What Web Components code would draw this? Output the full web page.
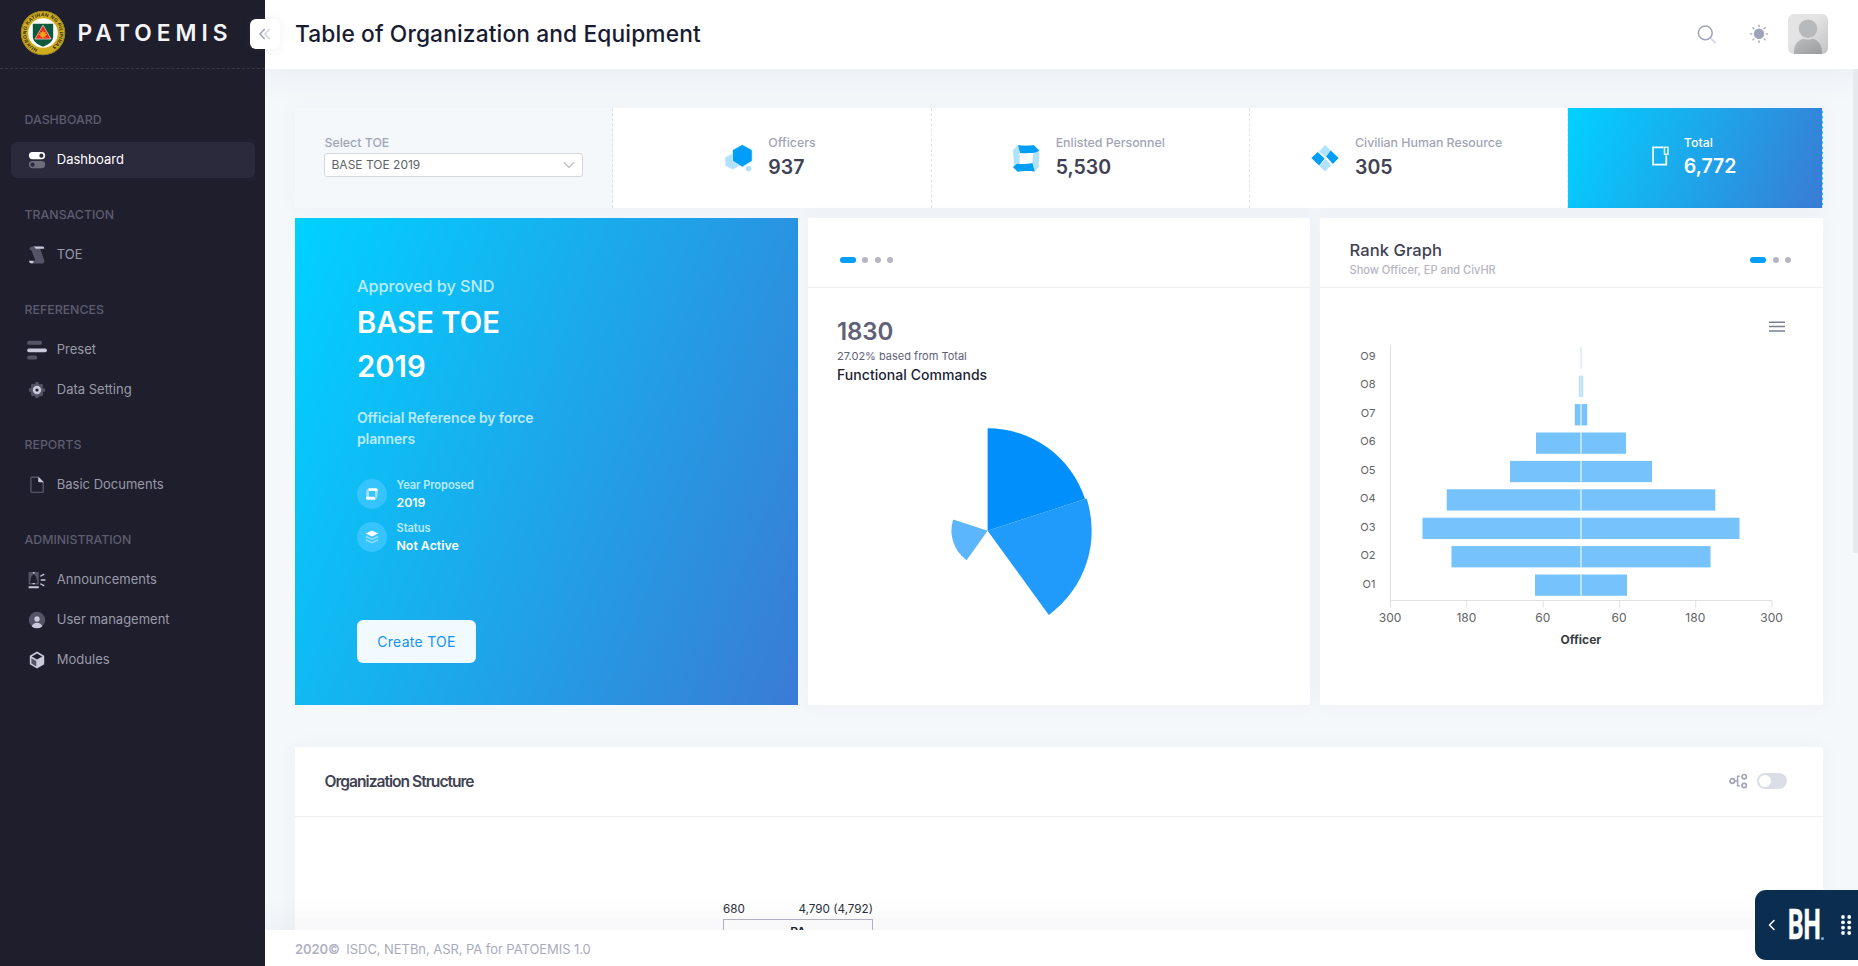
<!DOCTYPE html>
<html lang="en">
<head>
<meta charset="utf-8">
<title>PATOEMIS</title>
<style>
html,body{margin:0;height:100%;overflow:hidden}
body{font:400 13px/1.5 Inter,"Liberation Sans",sans-serif;color:#181c32;background:#f4f8fb}
</style>
</head>
<body>
<app-shell></app-shell>
<script>
const define=(name,html)=>customElements.define(name,class extends HTMLElement{
  constructor(){super();
    const t=document.createElement('template');
    t.innerHTML=typeof html==='function'?html(this):'<style>*{box-sizing:border-box}</style>'+html;
    this.attachShadow({mode:'open'}).append(t.content.cloneNode(true));}
});

/* ---------- icons ---------- */
const B='#c9c9dc',G='#555466';
const ICONS={
 toggles:`<path fill="#fff" fill-rule="evenodd" d="M5.5 2h9.1a3.6 3.6 0 0 1 0 7.2H5.5a3.6 3.6 0 0 1 0-7.2zM14.4 3.6a2.1 2.1 0 1 0 .01 0z"/><path fill="#6d6c7a" fill-rule="evenodd" d="M5.5 11h9.1a3.6 3.6 0 0 1 0 7.2H5.5a3.6 3.6 0 0 1 0-7.2zM5.6 12.5a2.1 2.1 0 1 0 .01 0z"/>`,
 scroll:`<path fill="${G}" d="M2.6 4.6C2.4 2.8 3.6 1.6 5.4 1.6H14l-.6 2.6 3.9 11.4c.4 1.6-.4 2.8-2 2.8H5.6l2.6-3.3L4.600 5.800z"/><path fill="${B}" d="M6 1.6h9.6c1.200 0 1.700.9 1.500 2.200H8.600C8.300 2.600 7.400 1.800 6 1.600zM2 15.700h4.800c0 1.600-.6 2.700-2 2.700-1.700 0-2.700-1-2.800-2.700z"/>`,
 bars:`<rect x=".2" y=".8" width="14.700" height="4" rx="1.6" fill="${G}"/><rect x=".2" y="8.400" width="19.700" height="3.800" rx="1.700" fill="${B}"/><rect x=".2" y="15.600" width="10" height="4" rx="1.600" fill="${G}"/>`,
 gear:`<g fill="${G}"><circle cx="10" cy="10" r="6.600"/><rect x="8.200" y="1.900" width="3.600" height="16.200" rx="1"/><rect x="1.900" y="8.200" width="16.200" height="3.600" rx="1"/><g transform="rotate(45 10 10)"><rect x="8.400" y="2.200" width="3.200" height="15.600" rx="1"/><rect x="2.200" y="8.400" width="15.600" height="3.200" rx="1"/></g></g><circle cx="10" cy="10" r="2.900" fill="#1e1e2d" stroke="${B}" stroke-width="2.600"/>`,
 file:`<path fill="none" stroke="${G}" stroke-width="1.400" d="M11.200 2.300H4.700c-.5 0-.8.3-.8.800v13.500c0 .5.300.8.800.8h10.700c.5 0 .8-.3.800-.8V7"/><path fill="${B}" d="M11.200 1.600l5.700 5.700h-4.500c-.8 0-1.200-.4-1.200-1.200z"/>`,
 siren:`<path fill="${G}" d="M2.600 1.900h8.200c.6 0 1 .4 1 1v11.600H1.600V2.900c0-.6.4-1 1-1z"/><path fill="#1e1e2d" d="M6.700 4.300c.6 0 1 .4 1.100 1 1.200.8 1.600 2 1.700 3.800l.8 2.900v.9H3.100V12l.8-2.900c.1-1.800.5-3 1.700-3.800.1-.6.5-1 1.100-1z"/><path fill="${B}" d="M5.900 2h1.600v1.400H5.900zM5.600 13h2.200v1.300H5.600zM1.600 16.200h10.200v2.100H2.200c-.4 0-.6-.2-.6-.6z"/><path stroke="${B}" stroke-width="1.400" stroke-linecap="round" d="M13.800 6l3-1.600M14.300 10h3.600M13.800 14l3 1.600"/>`,
 user:`<circle cx="10" cy="10" r="8.200" fill="${G}"/><circle cx="10" cy="9" r="2.700" fill="${B}"/><path fill="${B}" d="M4.800 16.400c.8-2.400 2.600-3.700 5.200-3.700s4.400 1.300 5.200 3.700A8.200 8.200 0 0 1 10 18.300a8.200 8.200 0 0 1-5.200-1.900z"/>`,
 cube:`<path fill="${B}" d="M10 1.600l7.200 4.200v8.400L10 18.400l-7.200-4.200V5.800z"/><path fill="#1e1e2d" d="M10 3.500l5.300 3.100L10 9.600 4.700 6.600z"/><path fill="${G}" d="M4.400 8.200L9.300 11v5.400l-4.900-2.900z"/>`
};
customElements.define('ui-icon',class extends HTMLElement{
  connectedCallback(){if(this.shadowRoot)return;
    this.attachShadow({mode:'open'}).innerHTML=`<style>:host{display:block;width:20px;height:20px;flex:none}svg{display:block}</style><svg width="20" height="20" viewBox="0 0 20 20">${ICONS[this.getAttribute('name')]}</svg>`;}
});

/* ---------- sidebar ---------- */
define('army-seal',`<style>:host{display:block;width:46px;height:46px;flex:none}svg{display:block}text{font:700 5px "Liberation Sans",sans-serif;fill:#2e2808}</style>
<svg width="46" height="46" viewBox="0 0 46 46"><defs><path id="ring" d="M23 39.600A16.600 16.600 0 1 1 23.010 39.600"/></defs>
<circle cx="23" cy="23" r="22.200" fill="#cfad1f"/><circle cx="23" cy="23" r="21.600" fill="none" stroke="#8d7a24" stroke-width=".8"/><circle cx="23" cy="23" r="14.800" fill="#fff"/>
<text><textPath href="#ring" startOffset="5" textLength="94">HUKBONG KATIHAN NG PILIPINAS</textPath></text>
<path fill="#0d5a3e" d="M12.800 13.800h20.400v12.400c0 5.200-4.200 7.800-10.200 10.600-6-2.800-10.200-5.400-10.200-10.600z"/><path fill="#f3241f" stroke="#f7e9d2" stroke-width=".7" d="M23 15.200l8 13.800H15z"/><circle cx="23" cy="24.600" r="2.700" fill="#f3a81c"/><path stroke="#f3a81c" stroke-width="1" d="M23 20.500v8.200M18.900 24.600h8.200M20.100 21.700l5.800 5.800M25.900 21.700l-5.800 5.800"/></svg>`);
define('brand-bar',`<style>:host{display:flex;box-sizing:border-box;height:69px;padding:0 0 2px 19.500px;align-items:center;gap:12px;border-bottom:1px dashed #393945;font-size:22.750px;font-weight:600;letter-spacing:5px;color:#f4f4f6;line-height:1}</style><army-seal></army-seal><span><slot></slot></span>`);
define('nav-heading',`<style>:host{display:flex;flex:none;box-sizing:border-box;align-items:center;height:40px;margin-top:15px;padding:1px 0 0 24.500px;font-size:12.350px;font-weight:500;color:#5d5c6d}</style><slot></slot>`);
customElements.define('nav-item',class extends HTMLElement{connectedCallback(){if(this.shadowRoot)return;
  this.attachShadow({mode:'open'}).innerHTML=`<style>:host{display:flex;flex:none;box-sizing:border-box;align-items:center;height:36px;margin:2px 10px 2px 11px;padding-left:15.800px;gap:10px;border-radius:6px;color:#9a9aa6}:host([active]){background:#2a2a3c;color:#fff}</style><ui-icon name="${this.getAttribute('icon')}"></ui-icon><span><slot></slot></span>`;}});
define('side-nav',`<style>:host{display:block;background:#1e1e2d}nav{padding-top:15.500px;display:flex;flex-direction:column}</style>
<brand-bar>PATOEMIS</brand-bar><nav>
<nav-heading>DASHBOARD</nav-heading><nav-item icon="toggles" active>Dashboard</nav-item>
<nav-heading>TRANSACTION</nav-heading><nav-item icon="scroll">TOE</nav-item>
<nav-heading>REFERENCES</nav-heading><nav-item icon="bars">Preset</nav-item><nav-item icon="gear">Data Setting</nav-item>
<nav-heading>REPORTS</nav-heading><nav-item icon="file">Basic Documents</nav-item>
<nav-heading>ADMINISTRATION</nav-heading><nav-item icon="siren">Announcements</nav-item><nav-item icon="user">User management</nav-item><nav-item icon="cube">Modules</nav-item>
</nav>`);

/* ---------- top and bottom bars ---------- */
define('top-bar',`<style>:host{display:flex;box-sizing:border-box;height:69px;padding:0 30px;align-items:center;background:#fff;box-shadow:0 10px 30px rgba(82,63,105,.05);position:relative;z-index:2}
h1{margin:-2px auto 0 0;font-size:22.750px;font-weight:500;letter-spacing:.12px;line-height:1.2;color:#181c32}svg{display:block;flex:none}.sun{margin:-1px 19px 0 31px}.se{margin-top:-1px}.av{border-radius:6px;margin-top:-1px}</style>
<h1>Table of Organization and Equipment</h1>
<svg class="se" width="22" height="22" viewBox="0 0 22 22" fill="none"><path d="M14.200 14.700l5.500 5.500" stroke="#d8d9e3" stroke-width="2"/><circle cx="9.300" cy="9.900" r="6.900" stroke="#a1a5bb" stroke-width="1.500"/></svg>
<svg class="sun" width="20" height="20" viewBox="0 0 20 20"><circle cx="10" cy="9.800" r="5.200" fill="#9fa2bb"/><g stroke="#9fa2bb" stroke-width="1.300" stroke-linecap="round"><path d="M10 1.200v1.400M10 17v1.400M1.400 9.800h1.400M17.200 9.800h1.400M3.900 3.700l1 1M15.100 14.900l1 1M3.900 15.900l1-1M15.100 4.700l1-1"/></g></svg>
<svg class="av" width="40" height="40" viewBox="0 0 40 40"><defs><linearGradient id="a" x1="0" y1="0" x2="1" y2="1"><stop offset=".4" stop-color="#e4e4e5"/><stop offset="1" stop-color="#c2c2c3"/></linearGradient><linearGradient id="b" x1="0" y1="0" x2="1" y2="1"><stop offset="0" stop-color="#bcbdbf"/><stop offset="1" stop-color="#9b9c9e"/></linearGradient></defs><rect width="40" height="40" fill="url(#a)"/><circle cx="20" cy="14.700" r="9.300" fill="#b8b9bb"/><path fill="url(#b)" d="M6 40v-2c0-7 4-12.500 9.500-13.300 2.800 1.200 6.200 1.200 9 0C30 25.500 34 31 34 38v2z"/></svg>`);
define('foot-bar',`<style>:host{display:flex;box-sizing:border-box;height:36px;padding:3px 30px 0;align-items:center;gap:6.500px;background:#fff;color:#a9abbd;box-shadow:0 -10px 30px rgba(82,63,105,.05);position:relative;z-index:2}b{font-weight:600;color:#b0b2c3;letter-spacing:-.08px}span{letter-spacing:-.06px}</style><b>2020©</b><span>ISDC, NETBn, ASR, PA for PATOEMIS 1.0</span>`);

/* ---------- stat strip ---------- */
define('stat-cell',`<style>:host{display:flex;box-sizing:border-box;align-items:center;gap:14px;background:#fff;border-right:1px dashed #e1e3ea;padding-left:var(--inset)}
.t{display:flex;flex-direction:column;margin-top:-2px}.l{font-size:12.350px;font-weight:500;line-height:20px;color:#a1a5b7}.v{font-size:19.500px;font-weight:600;line-height:29px;color:#3f4254}
::slotted(svg){flex:none;display:block}:host([solid]){background:linear-gradient(112.140deg,#00d2ff 0%,#3a7bd5 100%)}:host([solid]) .l,:host([solid]) .v{color:#fff}:host([solid]) .v{margin-top:-.5px}</style>
<slot name="icon"></slot><div class="t"><span class="l"><slot name="label"></slot></span><span class="v"><slot></slot></span></div>`);
define('toe-select',`<style>:host{display:block;padding:24.500px 29px 0 29px;border-right:1px dashed #dfe2e9;font-size:12.350px}
label{display:block;font-weight:500;line-height:20px;color:#a1a5b7;padding-left:.5px}.box{display:flex;align-items:center;justify-content:space-between;height:24px;border:1px solid #d5d8de;border-radius:3px;background:#fff;padding:0 7.500px 0 6.500px;font-size:12px;color:#606266}svg{display:block}</style>
<label>Select TOE</label><div class="box"><span>BASE TOE 2019</span><svg width="12" height="8" viewBox="0 0 12 8" fill="none" stroke="#b4b8bf" stroke-width="1.200"><path d="M1 1.300l5 5 5-5"/></svg></div>`);
define('stat-strip',`<style>:host{display:grid;grid-template-columns:5fr 5fr 5fr 5fr 4fr;height:100px;box-shadow:0 0 20px rgba(76,87,125,.04)}</style>
<toe-select></toe-select>
<stat-cell style="--inset:109px"><svg slot="icon" width="32" height="32" viewBox="0 0 32 32"><path fill="#b0e1fd" d="M10.500 11.500L17.700 15.500v8L10.500 27.500 3.300 23.500v-8zM26.500 23.700l2.800 1.500v2.900L26.500 29.800l-2.800-1.700v-2.900z"/><path fill="#009ef7" stroke="#fff" stroke-width=".6" d="M20.300 2.500L30.200 8v11L20.300 25 10.500 19V8z"/></svg><span slot="label">Officers</span>937</stat-cell>
<stat-cell style="--inset:78px"><svg slot="icon" width="32" height="32" viewBox="0 0 32 32"><path fill="#b0e1fd" d="M8 3L3 8.200l1 14.200L3.200 26 6 27l3.600-4.800V9.500zM23.400 10.200l5.200-3.500L29.300 11l-.5 12 .4 1.800-4.800 5L22.200 21z"/><path fill="#009ef7" d="M8 3.100c4 .8 12 .8 15.600 0L29 8.200 27.200 10c-4 1.300-12 1.400-17.200.9zM3 25l4.200-3.300c3.800.7 10.800.2 15.200-.7l2.400 8.700c-4.300-.8-12.400-.8-17.200.1z"/></svg><span slot="label">Enlisted Personnel</span>5,530</stat-cell>
<stat-cell style="--inset:59px"><svg slot="icon" width="32" height="32" viewBox="0 0 32 32"><path fill="#b0e1fd" d="M16 3l5.800 5.500-4 5-1.300 1.500-6.500-5.600zM16 29.400l6-6.200-5.200-6.300-6.400 7z"/><path fill="#009ef7" d="M8.700 9.900l6.900 6.500-5.400 7.200L2.300 16zM21.800 8.600l7.800 7.500-5.700 6-6.800-7.500z"/></svg><span slot="label">Civilian Human Resource</span>305</stat-cell>
<stat-cell solid style="--inset:69.500px"><svg slot="icon" width="32" height="32" viewBox="0 0 32 32" fill="none" stroke="#fff"><path stroke-width="1.700" d="M25.500 5.300H15.100v17.400h13.200V13.500"/><path stroke="#d9f1ff" stroke-width="1.600" d="M26.500 5.300h3.500v7h-3.500z"/></svg><span slot="label">Total</span>6,772</stat-cell>`);

/* ---------- cards ---------- */
define('hero-fact',`<style>:host{display:flex;gap:9.500px;height:43px}.c{width:30px;height:30px;border-radius:50%;background:#35c4fe;display:grid;place-items:center;flex:none}
.t{display:flex;flex-direction:column;margin-top:-3px}.l{font-size:11.050px;font-weight:600;letter-spacing:-.05px;line-height:18px;color:#baeaff}.v{font-size:12.350px;font-weight:600;line-height:18px;color:#fff}::slotted(svg){display:block}</style>
<div class="c"><slot name="icon"></slot></div><div class="t"><span class="l"><slot name="label"></slot></span><span class="v"><slot></slot></span></div>`);
define('hero-card',`<style>:host{display:flex;box-sizing:border-box;flex-direction:column;align-items:flex-start;padding:54px 62px 0;background:linear-gradient(112.140deg,#00d2ff 0%,#3a7bd5 100%);color:#fff}
.k{font-size:16.250px;font-weight:500;line-height:28px;color:#baebfe;letter-spacing:-.04px}h2{margin:1px 0 0;width:160px;font-size:29.250px;font-weight:600;line-height:44px}
p{margin:18px 0 30px;width:190px;font-size:13.975px;font-weight:600;letter-spacing:-.12px;line-height:21px;color:#baeafd}button{margin-top:54.500px;height:43px;width:119px;border:0;border-radius:6px;background:#f1faff;color:#1791f3;font:400 13.975px Inter,sans-serif;letter-spacing:.3px;padding:0}</style>
<span class="k">Approved by SND</span><h2>BASE TOE 2019</h2><p>Official Reference by force planners</p>
<hero-fact><svg slot="icon" width="14" height="14" viewBox="0 0 14 14"><path fill="#a3e2ff" d="M1.500 2.500L4 2v8.500l-3 2zM10 3l3-1-.8 8.500-2 1.800z"/><path fill="#fff" d="M3.200 1.300h8.300L13 3.200l-1 .9H4.300zM.8 11l1.500-1.200h7L10.600 12.700H2z"/></svg><span slot="label">Year Proposed</span>2019</hero-fact>
<hero-fact><svg slot="icon" width="14" height="14" viewBox="0 0 14 14"><path fill="none" stroke="#8fdcff" stroke-width="1.500" d="M.8 6.500L7 9.300l6.200-2.800M.8 9.800L7 12.600l6.200-2.800"/><path fill="#fff" d="M7 .6L13.400 3.600 7 6.600.6 3.600z"/></svg><span slot="label">Status</span>Not Active</hero-fact>
<button>Create TOE</button>`);
define('pager-dots',`<style>:host{display:flex;gap:6.500px;align-items:center}i{width:6px;height:6px;border-radius:3px;background:#b5b5c3}i:first-of-type{width:16px;background:#009ef7}:host([count="3"]) i:last-child{display:none}</style><i></i><i></i><i></i><i></i>`);
define('panel-card',`<style>:host{display:flex;box-sizing:border-box;flex-direction:column;background:#fff;box-shadow:0 0 20px rgba(76,87,125,.04)}header{display:flex;align-items:center;justify-content:space-between;height:70px;border-bottom:1px solid #eff0f2;padding:0 var(--hr,30px) 0 var(--hl,29.500px);flex:none}</style><header><slot name="head"></slot><slot name="tools"></slot></header><slot></slot>`);
define('command-summary',`<style>:host{display:block;padding:27px 29px 0}div{white-space:nowrap;padding-left:.5px}.n{font-size:24px;font-weight:600;line-height:34px;color:#5e6278;letter-spacing:-.1px}.s{font-size:11px;line-height:15.500px;color:#5e6278}.f{font-size:14px;font-weight:500;line-height:20px;color:#1b1f35;letter-spacing:.05px}svg{display:block;margin-top:36.500px}</style>
<div class="n">1830</div><div class="s">27.02% based from Total</div><div class="f">Functional Commands</div>
<svg width="440" height="220" viewBox="837 421 440 220">
<path fill="#008ffb" d="M987.600 530.700V428.300A102.400 102.400 0 0 1 1085 499.100z"/>
<path fill="#209bfc" d="M987.600 530.700L1086.600 498.500A104.100 104.100 0 0 1 1048.800 614.900z"/>
<path fill="#5cb6fd" d="M987.600 530.700L966.600 560.200A36.200 36.200 0 0 1 953.200 519.500z"/></svg>`);
define('rank-chart',()=>{
  const rows=[['O9',.9],['O8',2.2],['O7',6.2],['O6',45],['O5',71],['O4',134.3],['O3',158.5],['O2',129.5],['O1',46]];
  const cx=1581;let s='';
  rows.forEach(([n,w],i)=>{const y=347.3+i*28.4;const c=i==0?'#dff0fe':i==1?'#b9dffd':'#75c2fd';
    s+=`<rect x="${cx-w}" y="${y}" width="${w}" height="21.3" fill="${c}"/><rect x="${cx}" y="${y}" width="${w}" height="21.3" fill="${c}"/>`;
    s+=`<path d="M${cx} ${y}v21.3" stroke="${i?'#e3f3ff':'#dff0fe'}" stroke-width="${i>1?1.3:.8}"/>`;
    s+=`<text x="1375.5" y="${360+i*28.45}" text-anchor="end" font-size="11">${n}</text>`;});
  [300,180,60,60,180,300].forEach((v,i)=>{const x=1390.5+i*76.3;s+=`<path d="M${x} 601v6.5" stroke="#e0e0e0"/><text x="${x-.4}" y="622" text-anchor="middle" font-size="12">${v}</text>`;});
  return `<style>:host{display:block}svg{display:block}text{font-family:Inter,sans-serif;fill:#5f6366}.b{font-weight:700;fill:#373d3f}</style>
<svg width="503" height="417" viewBox="1320 288 503 417"><path d="M1390.5 345v255.5M1390 600.5h382" stroke="#e0e0e0" fill="none"/>${s}<text class="b" x="1580.800" y="644" text-anchor="middle" font-size="12">Officer</text>
<path d="M1769 322.200h16M1769 326.600h16M1769 331h16" stroke="#758194" stroke-width="1.500"/></svg>`;});
define('rank-title',`<style>:host{display:block;margin-top:13px}b{display:block;font-size:16.575px;font-weight:500;line-height:22px;color:#3f4254;letter-spacing:.05px}span{display:block;font-size:11.050px;font-weight:500;line-height:18px;color:#b5b5c3}</style><b>Rank Graph</b><span>Show Officer, EP and CivHR</span>`);
define('org-tools',`<style>:host{display:flex;align-items:center;gap:9px;margin-top:-2px}.s{box-sizing:border-box;width:30px;height:16px;border-radius:8px;background:#dcdee7;padding:2px}.s i{display:block;width:12px;height:12px;border-radius:50%;background:#fff}svg{display:block}</style>
<svg width="19" height="18" viewBox="0 0 19 18" fill="none" stroke="#a1a5b7" stroke-width="1.700"><circle cx="3.300" cy="9" r="2.300"/><circle cx="15.200" cy="4.700" r="2.200"/><circle cx="15.200" cy="13.500" r="2.200"/><path d="M5.600 9H8M10.800 4.200H8.600v9.600h2.200" stroke-width="1.500"/></svg><div class="s"><i></i></div>`);
define('org-chart',`<style>:host{display:block;padding:83px 0 0 428px}.c{display:flex;justify-content:space-between;width:150px;font-size:11.700px;line-height:18px;color:#2b2f3a}.n{box-sizing:border-box;width:150px;height:60px;border:1px solid #b5b5c3;margin-top:.5px;text-align:center;font-size:12px;font-weight:600;line-height:24px;background:#fff}</style><div class="c"><span>680</span><span>4,790 (4,792)</span></div><div class="n">PA</div>`);
define('dash-page',`<style>:host{display:block;padding:39px 35px 0 30px;overflow:hidden}.row{display:grid;grid-template-columns:repeat(3,1fr);gap:10px;height:487px;margin:10px 0 42px}.org{height:300px;--hl:29.500px;--hr:36px}h3{margin:0;font-size:15.600px;font-weight:600;letter-spacing:-1px;color:#3f4254}.two{--hl:32px}.rank{--hr:32px}pager-dots{margin-top:14px}
</style>
<stat-strip></stat-strip>
<div class="row"><hero-card></hero-card>
<panel-card class="two"><pager-dots slot="head"></pager-dots><command-summary></command-summary></panel-card>
<panel-card class="rank"><rank-title slot="head"></rank-title><pager-dots slot="tools" count="3"></pager-dots><rank-chart></rank-chart></panel-card></div>
<panel-card class="org"><h3 slot="head">Organization Structure</h3><org-tools slot="tools"></org-tools><org-chart></org-chart></panel-card>`);

/* ---------- floating pieces ---------- */
define('collapse-button',`<style>:host{position:absolute;left:250px;top:19px;width:30px;height:30px;border-radius:6px;background:#fff;box-shadow:0 0 10px rgba(113,121,136,.1);display:grid;place-items:center;z-index:4}svg{display:block}</style><svg width="14" height="14" viewBox="0 0 14 14" fill="none" stroke-width="1.600"><path stroke="#a1a5b7" d="M6.700 2L2 7l4.700 5"/><path stroke="#d3d5df" d="M11.700 2L7 7l4.700 5"/></svg>`);
define('bh-widget',`<style>:host{position:absolute;right:0;top:890px;width:103px;height:70px;border-radius:11px 0 0 11px;background:#0b2d50;z-index:5;display:flex;align-items:center}svg{display:block;flex:none}.w{width:31px;height:30px;margin-left:11.500px;display:flex;align-items:center;flex:none}.w span{font:700 42px/30px Roboto,sans-serif;color:#fff;-webkit-text-stroke:.6px #fff;transform:scaleX(.58);transform-origin:0 50%;display:block}.d{width:3px;height:3px;border-radius:50%;background:#6fb7e6;margin:26px 0 0 2px;flex:none}</style>
<svg style="margin-left:13px" width="8" height="12" viewBox="0 0 8 12" fill="none" stroke="#fff" stroke-width="1.500" stroke-linecap="round" stroke-linejoin="round"><path d="M6 1.500L1.500 6 6 10.500"/></svg>
<div class="w"><span>BH</span></div><i class="d"></i>
<svg style="margin-left:15.500px" width="14" height="24" viewBox="0 0 14 24" fill="#fff"><circle cx="4" cy="4" r="1.900"/><circle cx="10.200" cy="4" r="1.900"/><circle cx="4" cy="9.300" r="1.900"/><circle cx="10.200" cy="9.300" r="1.900"/><circle cx="4" cy="14.700" r="1.900"/><circle cx="10.200" cy="14.700" r="1.900"/><circle cx="4" cy="20" r="1.900"/><circle cx="10.200" cy="20" r="1.900"/></svg>`);
define('app-shell',`<style>:host{display:grid;grid-template-columns:265px minmax(0,1fr);height:966px;position:relative;overflow:hidden}side-nav{z-index:3}main{display:grid;grid-template-rows:69px minmax(0,1fr) 36px;min-height:0}.thumb{position:absolute;right:0;top:69px;width:5px;height:484px;background:#e6eaee;z-index:3}</style>
<side-nav></side-nav><main><top-bar></top-bar><dash-page></dash-page><foot-bar></foot-bar></main>
<div class="thumb"></div><collapse-button></collapse-button><bh-widget></bh-widget>`);
</script>
</body>
</html>
